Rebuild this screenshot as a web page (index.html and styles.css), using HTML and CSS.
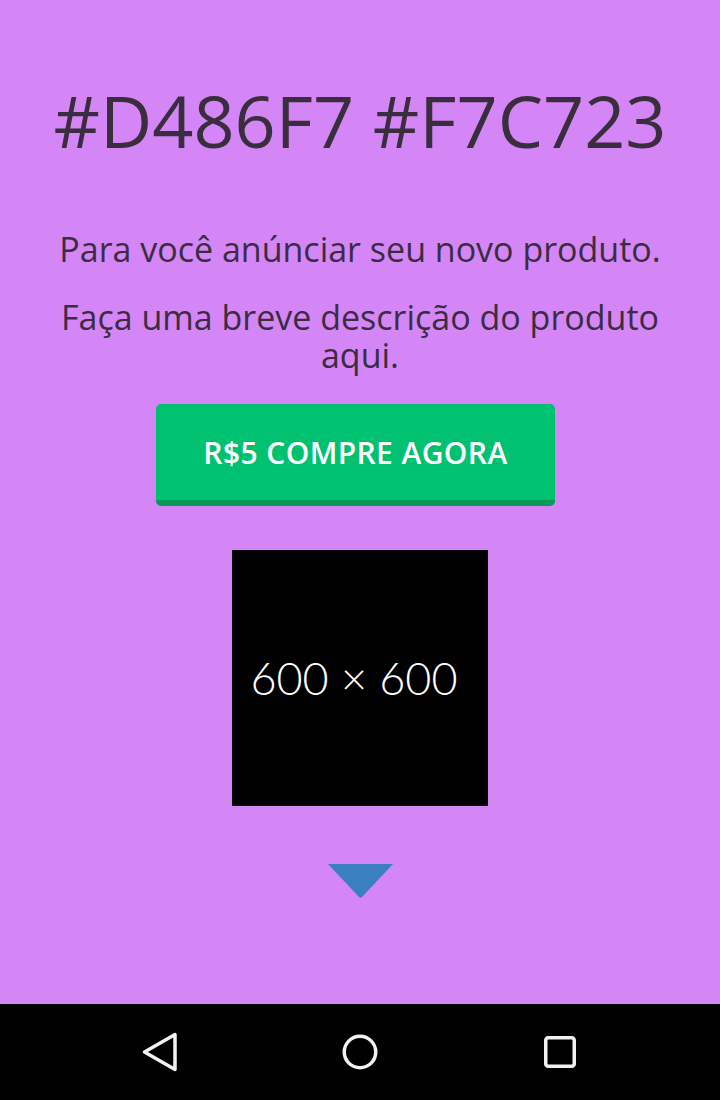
FILE: index.html
```html
<!DOCTYPE html>
<html lang="pt">
<head>
<meta charset="utf-8">
<title>Produto</title>
<link rel="stylesheet" href="styles.css">
</head>
<body>
<div class="screen">
  <main class="content">
    <h1 class="title">#D486F7 #F7C723</h1>
    <p class="lead">Para você anúnciar seu novo produto.</p>
    <p class="desc">Faça uma breve descrição do produto aqui.</p>
    <a class="buy" href="#">R$5 COMPRE AGORA</a>
    <div class="placeholder"><span>600 × 600</span></div>
    <svg class="arrow" width="67" height="36" viewBox="0 0 67 36" aria-hidden="true">
      <path d="M1 1 H66 L35 34 Q33.5 35.5 32 34 Z" fill="#3a7fc0"/>
    </svg>
  </main>
  <nav class="navbar">
    <svg class="nav-icon" width="40" height="40" viewBox="0 0 40 40" aria-hidden="true">
      <path d="M35 2.5 V37.5 L4.5 20 Z" fill="none" stroke="#f2f2f2" stroke-width="3.5" stroke-linejoin="round"/>
    </svg>
    <svg class="nav-icon" width="40" height="40" viewBox="0 0 40 40" aria-hidden="true">
      <circle cx="20" cy="20" r="15.75" fill="none" stroke="#f2f2f2" stroke-width="3.5"/>
    </svg>
    <svg class="nav-icon" width="40" height="40" viewBox="0 0 40 40" aria-hidden="true">
      <rect x="5.75" y="5.75" width="28.5" height="28.5" rx="2.5" fill="none" stroke="#f2f2f2" stroke-width="3.5"/>
    </svg>
  </nav>
</div>
</body>
</html>
```

FILE: styles.css
```css
html, body {
  margin: 0;
  padding: 0;
}

body {
  background: #d486f7;
  font-family: "Open Sans", "Noto Sans", sans-serif;
}

.screen {
  width: 720px;
  height: 1100px;
  display: flex;
  flex-direction: column;
}

.content {
  flex: 1;
  display: flex;
  flex-direction: column;
  align-items: center;
  padding-top: 77px;
  text-align: center;
  color: #3b2c42;
}

.title {
  margin: 0;
  font-size: 72px;
  font-weight: 400;
  line-height: 86px;
  color: #3a2d3e;
}

.lead {
  margin: 67px 0 0;
  font-size: 34px;
  line-height: 38px;
  padding: 0 40px;
}

.desc {
  margin: 30px 0 0;
  font-size: 34px;
  line-height: 38px;
  padding: 0 40px;
}

.buy {
  margin: 30px 9px 0 0;
  width: 399px;
  height: 96px;
  box-sizing: content-box;
  display: flex;
  align-items: center;
  justify-content: center;
  background: #00c170;
  border-bottom: 6px solid #07995b;
  border-radius: 5px;
  color: #ffffff;
  text-decoration: none;
  font-size: 30px;
  font-weight: 600;
  letter-spacing: 0.4px;
}

.placeholder {
  margin-top: 44px;
  width: 256px;
  height: 256px;
  box-sizing: border-box;
  padding-right: 12px;
  background: #000;
  display: flex;
  align-items: center;
  justify-content: center;
  color: #ffffff;
  font-family: "Lato", "Open Sans", sans-serif;
  font-weight: 300;
  font-size: 45px;
}

.arrow {
  margin-top: 57px;
  display: block;
}

.navbar {
  height: 96px;
  background: #000;
  display: flex;
  align-items: center;
  justify-content: center;
  gap: 160px;
}

.nav-icon {
  display: block;
}
```
